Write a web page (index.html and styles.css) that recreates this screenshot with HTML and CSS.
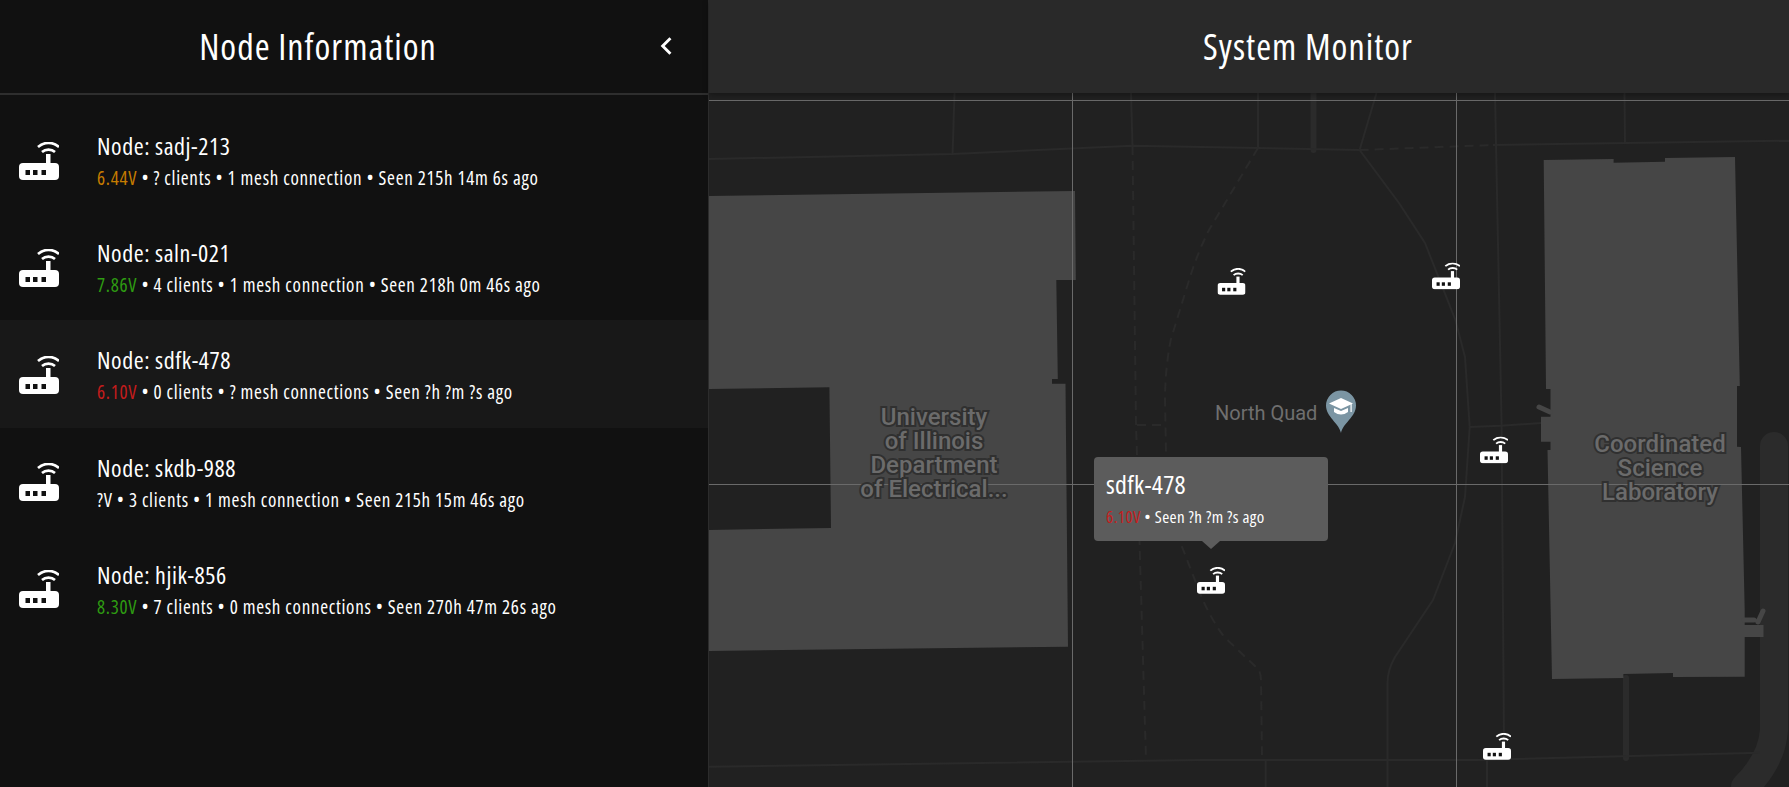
FILE: index.html
```html
<!DOCTYPE html>
<html lang="en">
<head>
    <meta charset="UTF-8">
    <meta name="viewport" content="width=device-width, initial-scale=1.0">
    <title>System Monitor</title>
    <link rel="stylesheet" href="styles.css">
</head>
<body>
    <svg class="defs" width="0" height="0">
        <symbol id="router" viewBox="0 0 40 38">
            <rect x="0" y="21" width="40" height="17" rx="4" fill="#fff"/>
            <rect x="27" y="12" width="4.500" height="10" fill="#fff"/>
            <path d="M19 5 C25 -0.500 34 -0.500 40 5" fill="none" stroke="#fff" stroke-width="2.600"/>
            <path d="M23 10 C26.500 6.800 32.500 6.800 36 10" fill="none" stroke="#fff" stroke-width="2.600"/>
            <rect x="6.500" y="28" width="4.500" height="5" fill="#111"/>
            <rect x="14" y="28" width="4.500" height="5" fill="#111"/>
            <rect x="22.500" y="28" width="4.500" height="5" fill="#111"/>
        </symbol>
    </svg>

    <aside class="sidebar">
        <header class="sidebar-header">
            <h1>Node Information</h1>
            <svg class="chevron" viewBox="0 0 12 18"><path d="M10 2 L3 9 L10 16" fill="none" stroke="#fff" stroke-width="2.600"/></svg>
        </header>
        <div class="node-list">
            <div class="node-row">
                <svg class="node-icon"><use href="#router"/></svg>
                <div>
                    <div class="node-name">Node: sadj-213</div>
                    <div class="node-info"><span class="warn">6.44V</span> • ? clients • 1 mesh connection • Seen 215h 14m 6s ago</div>
                </div>
            </div>
            <div class="node-row">
                <svg class="node-icon"><use href="#router"/></svg>
                <div>
                    <div class="node-name">Node: saln-021</div>
                    <div class="node-info"><span class="good">7.86V</span> • 4 clients • 1 mesh connection • Seen 218h 0m 46s ago</div>
                </div>
            </div>
            <div class="node-row active">
                <svg class="node-icon"><use href="#router"/></svg>
                <div>
                    <div class="node-name">Node: sdfk-478</div>
                    <div class="node-info"><span class="bad">6.10V</span> • 0 clients • ? mesh connections • Seen ?h ?m ?s ago</div>
                </div>
            </div>
            <div class="node-row">
                <svg class="node-icon"><use href="#router"/></svg>
                <div>
                    <div class="node-name">Node: skdb-988</div>
                    <div class="node-info">?V • 3 clients • 1 mesh connection • Seen 215h 15m 46s ago</div>
                </div>
            </div>
            <div class="node-row">
                <svg class="node-icon"><use href="#router"/></svg>
                <div>
                    <div class="node-name">Node: hjik-856</div>
                    <div class="node-info"><span class="good">8.30V</span> • 7 clients • 0 mesh connections • Seen 270h 47m 26s ago</div>
                </div>
            </div>
        </div>
    </aside>

    <main class="monitor">
        <svg class="map" viewBox="709 0 1080 787">
            <!-- wide roads -->
            <path class="road-wide" d="M1774 446 L1774 730 Q1772 760 1745 787"/>
            <path class="road-mid" d="M1626 678 L1626 758"/>
            <path class="road-mid" d="M1313.500 93 L1313.500 150"/>

            <!-- thin roads -->
            <path class="road" d="M708 159 L952.600 154 L1132.500 145.700 L1258 148 L1359.600 150"/>
            <path class="road" d="M1493 145 L1789 140.700"/>
            <path class="road" d="M954.500 93 L952.600 154 M1131 93 L1132.500 146 M1258 93 L1258 148 M1376.500 93 L1359.600 150 M1624.500 93 L1625 143"/>
            <path class="road" d="M1495 93 L1501.600 425 L1504 745 M1487 760 L1487 787 M1265.700 760 L1265.700 787"/>
            <path class="road" d="M1359.600 150 L1399 203 L1425 243 L1455.400 320 L1465 357 L1469.700 427 L1465 497 L1455 543 L1433 600 L1395 657 Q1387.500 670 1387.500 683 L1387.500 787"/>
            <path class="road" d="M1469.700 427 L1500.500 425.700 L1541 423"/>
            <path class="road" d="M708 766.700 L1200 760 L1478 760 L1760 752.700"/>

            <!-- footpaths -->
            <path class="path" d="M1359.600 150 L1493 145"/>
            <path class="path" d="M1258 148 L1209 230 Q1198 252 1190 277 L1170.700 340 Q1165 370 1165 400 L1166 453 L1180 541.700 L1197.500 586.700 Q1208 615 1224 636.700 L1257 668 Q1261 672 1261 680 L1262 755"/>
            <path class="path" d="M1132.500 146 L1136 423 L1146 760"/>
            <path class="path" d="M1137 425 L1165 425"/>

            <!-- buildings -->
            <path class="building" fill-rule="evenodd" d="M708 196 L1075 191 L1075.800 280 L1056.300 280 L1057.800 379 L1052 379 L1052 383.700 L1065.500 383.700 L1068 646.700 L708 651 Z M708 389 L829.400 387.300 L831 528 L708 530 Z"/>
            <path class="building" d="M1543.700 160 L1613.600 159 L1613.600 162.700 L1665 161.700 L1665 158 L1735 157 L1739.800 386 L1737 386 L1737 446.700 L1741 447 L1744.700 610 L1744.700 676.700 L1673 677 L1673 673 L1623.400 674 L1623.400 678 L1552 679 L1547.500 450 L1550.500 450 L1550.500 441.700 L1541 441.700 L1541 416.700 L1550.500 416.700 L1550.500 389 L1546 389 Z"/>
            <path class="building" d="M1743.600 625 L1763.500 625 L1763.500 637 L1743.600 637 Z"/>
            <path class="stub" d="M1539 407 L1550 412"/>
            <path class="stub" d="M1744 620 L1754 620 M1758 622 L1763 611"/>

            <!-- grid lines -->
            <path class="grid" d="M709 100.500 L1789 100.500 M709 484.500 L1789 484.500 M1072.500 93 L1072.500 787 M1456.500 93 L1456.500 787"/>

            <text class="poi" x="1215" y="420">North Quad</text>

            <!-- north quad pin -->
            <path class="pin" d="M1341 433 C1339 423 1326 417 1326 405.500 A15 15 0 0 1 1356 405.500 C1356 417 1343 423 1341 433 Z"/>
            <path class="cap" d="M1341 398 L1353 403.500 L1341 409 L1329 403.500 Z"/>
            <path class="cap" d="M1334 408 L1341 411 L1348 408 L1348 412 Q1341 417 1334 412 Z"/>
            <rect class="cap" x="1350.500" y="404" width="1.200" height="8"/>

            <!-- nodes -->
            <use href="#router" x="1217.500" y="268" width="28" height="27"/>
            <use href="#router" x="1432" y="262.500" width="28" height="27"/>
            <use href="#router" x="1480" y="436.500" width="28" height="27"/>
            <use href="#router" x="1483" y="733" width="28" height="27"/>
            <use href="#router" x="1197" y="567" width="28" height="27"/>
        </svg>

        <div class="place place-eceb">University<br>of Illinois<br>Department<br>of Electrical...</div>
        <div class="place place-csl">Coordinated<br>Science<br>Laboratory</div>

        <header class="monitor-header">
            <h1>System Monitor</h1>
        </header>

        <div class="tooltip">
            <div class="tooltip-name">sdfk-478</div>
            <div class="tooltip-info"><span class="bad">6.10V</span> • Seen ?h ?m ?s ago</div>
        </div>
    </main>
</body>
</html>
```

FILE: styles.css
```css
* {
    box-sizing: border-box;
}

body {
    margin: 0;
    height: 787px;
    overflow: hidden;
    display: flex;
    background-color: #212121;
    color: #fff;
    font-family: "Open Sans", sans-serif;
    font-stretch: 75%;
}

.defs {
    position: absolute;
}

h1 {
    margin: 0;
    font-size: 36px;
    font-weight: 400;
    letter-spacing: 1px;
}

.sidebar {
    width: 709px;
    flex-shrink: 0;
    background-color: #111;
    border-right: 1px solid #2c2c2c;
}

.sidebar-header {
    position: relative;
    height: 95px;
    display: flex;
    align-items: center;
    justify-content: center;
    padding-right: 72px;
    border-bottom: 2px solid #2e2e2e;
}

.chevron {
    position: absolute;
    left: 659px;
    top: 36px;
    width: 14px;
    height: 20px;
}

.node-list {
    padding-top: 11px;
}

.node-row {
    height: 107.2px;
    display: flex;
    align-items: center;
    gap: 38px;
    padding-left: 19px;
}

.node-row.active {
    background-color: #181818;
}

.node-icon {
    width: 40px;
    height: 38px;
    flex-shrink: 0;
    margin-top: 2px;
}

.node-name {
    font-size: 24px;
    line-height: 30px;
    margin-top: 2px;
    margin-bottom: 5px;
    letter-spacing: 0.55px;
}

.node-info {
    font-size: 19px;
    line-height: 24px;
    letter-spacing: 0.7px;
}

.warn {
    color: #c67c00;
}

.good {
    color: #2e9c12;
}

.bad {
    color: #c41c1c;
}

.monitor {
    position: relative;
    flex: 1;
}

.monitor-header {
    position: absolute;
    top: 0;
    left: 0;
    right: 0;
    height: 93px;
    display: flex;
    align-items: center;
    justify-content: center;
    padding-left: 118px;
    background-color: #292929;
    box-shadow: 0 2px 6px rgba(0, 0, 0, 0.35);
}

.map {
    position: absolute;
    top: 0;
    left: 0;
    width: 1080px;
    height: 787px;
}

.road,
.path {
    fill: none;
    stroke: #2a2a2a;
    stroke-width: 2;
}

.path {
    stroke-dasharray: 9 6;
}

.road-wide {
    fill: none;
    stroke: #2b2b2b;
    stroke-width: 28;
    stroke-linecap: round;
}

.road-mid {
    fill: none;
    stroke: #2b2b2b;
    stroke-width: 6;
    stroke-linecap: round;
}

.building {
    fill: #464646;
}

.stub {
    fill: none;
    stroke: #464646;
    stroke-width: 5;
    stroke-linecap: round;
}

.grid {
    fill: none;
    stroke: #6a6a6a;
    stroke-width: 1;
}

.place {
    position: absolute;
    width: 200px;
    text-align: center;
    font-family: Roboto, sans-serif;
    font-stretch: 100%;
    font-size: 24px;
    line-height: 24px;
    font-weight: 500;
    color: #6b6b6b;
    -webkit-text-stroke: 4px #303030;
    paint-order: stroke fill;
}

.place-eceb {
    left: 125px;
    top: 405px;
}

.place-csl {
    left: 851px;
    top: 432px;
}

.poi {
    font-family: Roboto, sans-serif;
    font-stretch: 100%;
    font-size: 20px;
    fill: #6f6f6f;
}

.pin {
    fill: #7b95a3;
}

.cap {
    fill: #fff;
}

.tooltip {
    position: absolute;
    left: 385px;
    top: 457px;
    width: 234px;
    height: 84px;
    padding: 11px 12px;
    background-color: #5c5c5c;
    border-radius: 4px;
}

.tooltip::after {
    content: "";
    position: absolute;
    left: 108px;
    bottom: -8px;
    border-left: 9px solid transparent;
    border-right: 9px solid transparent;
    border-top: 8px solid #5c5c5c;
}

.tooltip-name {
    font-size: 26px;
    line-height: 32px;
    margin-bottom: 6px;
    letter-spacing: 0.3px;
}

.tooltip-info {
    font-size: 17px;
    line-height: 22px;
    letter-spacing: 0.4px;
}
```
